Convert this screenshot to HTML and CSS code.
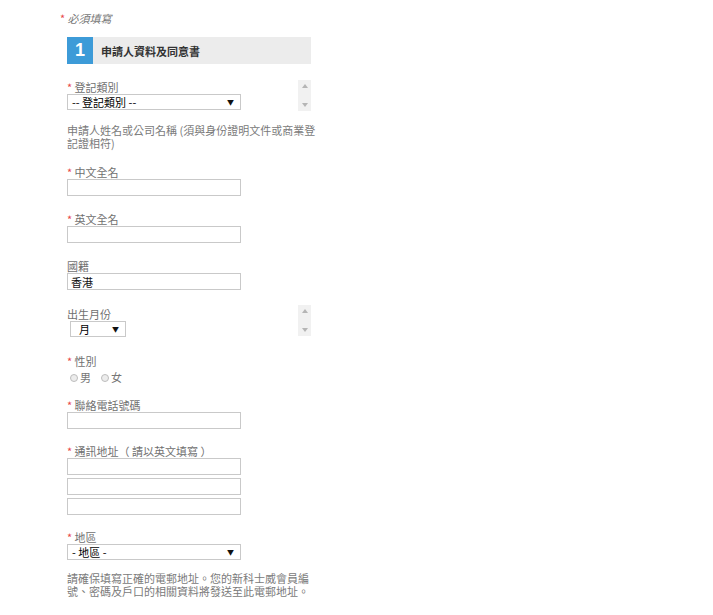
FILE: index.html
```html
<!DOCTYPE html>
<html lang="zh-Hant">
<head>
<meta charset="utf-8">
<title>申請人資料及同意書</title>
<link rel="stylesheet" href="styles.css">
</head>
<body>
<div class="page">
  <p class="note"><span class="req">*</span> <em>必須填寫</em></p>
  <div class="form">
    <div class="step">
      <span class="step-num">1</span>
      <span class="step-title">申請人資料及同意書</span>
    </div>

    <div class="row row-first">
      <div class="col">
        <div class="label"><span class="req">*</span> 登記類別</div>
        <div class="select select-wide"><span class="sel-text">-- 登記類別 --</span><span class="arrow">▼</span></div>
      </div>
      <div class="spinner"><span class="tri up"></span><span class="tri down"></span></div>
    </div>

    <p class="help help-name">申請人姓名或公司名稱 (須與身份證明文件或商業登記證相符)</p>

    <div class="field">
      <div class="label"><span class="req">*</span> 中文全名</div>
      <input class="text" type="text">
    </div>

    <div class="field">
      <div class="label"><span class="req">*</span> 英文全名</div>
      <input class="text" type="text">
    </div>

    <div class="field field-nat">
      <div class="label">國籍</div>
      <input class="text" type="text" value="香港">
    </div>

    <div class="row row-month">
      <div class="col col-month">
        <div class="label">出生月份</div>
        <div class="select select-month"><span class="sel-text">月</span><span class="arrow">▼</span></div>
      </div>
      <div class="spinner"><span class="tri up"></span><span class="tri down"></span></div>
    </div>

    <div class="field field-gender">
      <div class="label"><span class="req">*</span> 性別</div>
      <div class="radios">
        <span class="radio"><span class="dot"></span><span class="rtext">男</span></span>
        <span class="radio"><span class="dot"></span><span class="rtext">女</span></span>
      </div>
    </div>

    <div class="field field-phone">
      <div class="label"><span class="req">*</span> 聯絡電話號碼</div>
      <input class="text" type="text">
    </div>

    <div class="field field-addr">
      <div class="label"><span class="req">*</span> 通訊地址（ 請以英文填寫 ）</div>
      <div class="addr">
        <input class="text" type="text">
        <input class="text" type="text">
        <input class="text" type="text">
      </div>
    </div>

    <div class="field field-area">
      <div class="label"><span class="req">*</span> 地區</div>
      <div class="select select-wide"><span class="sel-text">- 地區 -</span><span class="arrow">▼</span></div>
    </div>

    <p class="help help-email">請確保填寫正確的電郵地址。您的新科士威會員編號、密碼及戶口的相關資料將發送至此電郵地址。</p>
  </div>
</div>
</body>
</html>
```

FILE: styles.css
```css
* { box-sizing: border-box; }
html, body { margin: 0; padding: 0; background: #fff; }
body {
  font-family: "Noto Sans CJK TC", "Liberation Sans", sans-serif;
  font-size: 11px;
  color: #707070;
}
.page { padding: 11px 0 0 60px; }
.note {
  margin: 0;
  line-height: 14px;
  font-size: 11px;
  color: #777;
}
.note em { font-style: italic; }
.req { color: #e8474a; }

.form { margin-left: 7px; width: 244px; }

.step {
  margin-top: 12px;
  height: 27px;
  background: #ececec;
  display: flex;
  align-items: center;
}
.step-num {
  width: 26px;
  height: 27px;
  background: #3d9bd8;
  color: #fff;
  font-family: "Liberation Sans", sans-serif;
  font-weight: bold;
  font-size: 18px;
  display: flex;
  align-items: center;
  justify-content: center;
}
.step-title {
  margin-left: 8px;
  font-weight: bold;
  font-size: 11px;
  color: #333;
}

.row {
  display: flex;
  justify-content: space-between;
  align-items: flex-start;
}
.row-first { margin-top: 16px; }
.row-first .col { padding-top: 1px; }
.row-month { margin-top: 15px; }
.row-month .col { padding-top: 3px; }

.spinner {
  width: 13px;
  height: 31px;
  background: #f1f1f1;
  display: flex;
  flex-direction: column;
  justify-content: space-between;
  align-items: center;
  padding: 4px 0;
}
.tri {
  width: 0;
  height: 0;
  border-left: 3px solid transparent;
  border-right: 3px solid transparent;
}
.tri.up { border-bottom: 4px solid #b5b5b5; }
.tri.down { border-top: 4px solid #b5b5b5; }

.label { line-height: 13px; color: #707070; }

.select {
  height: 16px;
  border: 1px solid #c9c9c9;
  background: #fff;
  display: flex;
  align-items: center;
  justify-content: space-between;
  padding: 0 6px 0 4px;
  color: #111;
}
.select-wide { width: 174px; }
.select-month { width: 56px; margin-left: 3px; padding-left: 8px; }
.sel-text { font-size: 11px; line-height: 14px; font-weight: 400; color: #000; }
.arrow { font-size: 7px; color: #111; line-height: 14px; }

.help {
  margin: 0;
  line-height: 13px;
  color: #7a7a7a;
}
.help-name { margin-top: 13px; width: 252px; }

.field { margin-top: 16px; }
.field + .field { margin-top: 17px; }

.text {
  display: block;
  width: 174px;
  height: 17px;
  border: 1px solid #c9c9c9;
  padding: 0 3px;
  margin: 0;
  font-family: "Noto Sans CJK TC", "Liberation Sans", sans-serif;
  font-size: 11px;
  color: #111;
  background: #fff;
  outline: none;
}

.field-gender { margin-top: 18px; }
.radios {
  display: flex;
  gap: 10px;
  line-height: 13px;
  margin-top: 3px;
  padding-left: 3px;
  color: #777;
  font-size: 11px;
}
.radio { display: flex; align-items: center; gap: 2px; }
.dot {
  width: 8px;
  height: 8px;
  border-radius: 50%;
  border: 1px solid #bdbdbd;
  background: #ececec;
  flex: none;
}

.field + .field.field-phone { margin-top: 15px; }
.addr { display: flex; flex-direction: column; gap: 3px; }
.field + .field.field-addr { margin-top: 16px; }

.field + .field.field-area { margin-top: 16px; }
.help-email { margin-top: 12px; }
```
